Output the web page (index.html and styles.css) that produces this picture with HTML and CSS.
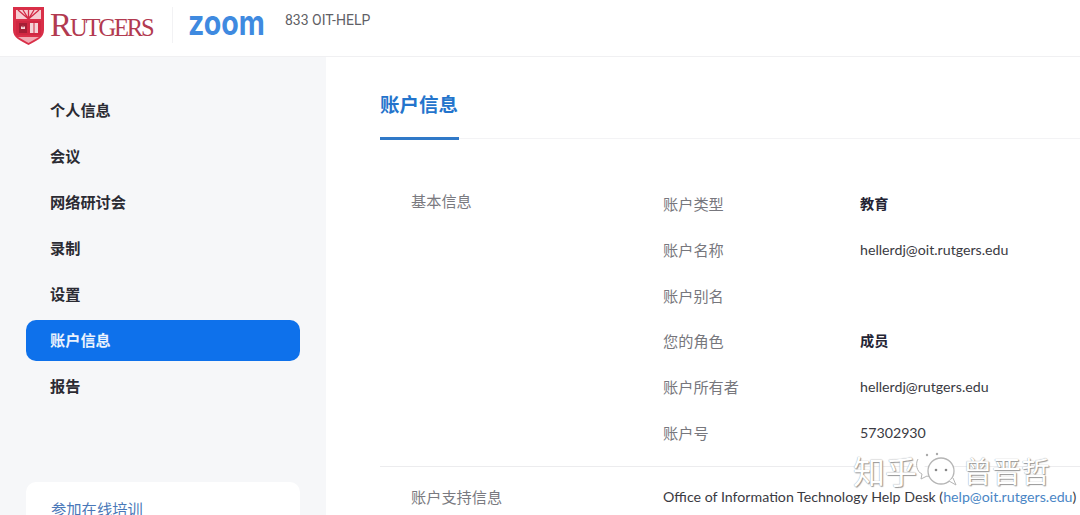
FILE: index.html
```html
<!DOCTYPE html>
<html lang="zh">
<head>
  <meta charset="UTF-8" />
  <title>账户信息</title>
  <link rel="stylesheet" href="styles.css">
</head>
<body>
  <header class="topbar">
    <svg class="shield" width="31" height="38" viewBox="0 0 31 38">
      <path d="M0 0h31v23c0 8-8 11-15.500 15C8 34 0 31 0 23z" fill="#d92f48"/>
      <path d="M3 3h25v9H3z" fill="#f6cdd2"/>
      <path d="M15.500 12 5 3M15.500 12 10 3M15.500 12V3M15.500 12 21 3M15.500 12 26 3" stroke="#d22a44" stroke-width="1.300"/>
      <path d="M3 14h25v14H3z" fill="#d12742"/>
      <path d="M6 16h8v10H6z" fill="#a51e35"/>
      <path d="M8 19l1.500 1.500L10 18l.5 2.500L12 19v3H8z" fill="#f4d4d8"/>
      <path d="M17 16h8v10h-8z" fill="#f4d4d8"/>
      <path d="M21 16v10" stroke="#d12742"/>
      <path d="M5 30h21l-10.500 6z" fill="#f2aab4"/>
    </svg>
    <span class="wordmark">R<small>UTGERS</small></span>
    <span class="topbar-sep"></span>
    <span class="zoom-logo">zoom</span>
    <span class="phone">833 OIT-HELP</span>
  </header>

  <div class="layout">
    <aside class="sidebar">
      <nav class="nav">
        <a class="nav-item">个人信息</a>
        <a class="nav-item">会议</a>
        <a class="nav-item">网络研讨会</a>
        <a class="nav-item">录制</a>
        <a class="nav-item">设置</a>
        <a class="nav-item active">账户信息</a>
        <a class="nav-item">报告</a>
      </nav>
      <div class="training">参加在线培训</div>
    </aside>

    <main class="content">
      <div class="tabs"><span class="tab">账户信息</span></div>

      <section class="section first">
        <h2 class="section-title">基本信息</h2>
        <div class="rows">
          <div class="row"><span class="label">账户类型</span><b class="value">教育</b></div>
          <div class="row"><span class="label">账户名称</span><span class="value">hellerdj@oit.rutgers.edu</span></div>
          <div class="row"><span class="label">账户别名</span></div>
          <div class="row"><span class="label">您的角色</span><b class="value">成员</b></div>
          <div class="row"><span class="label">账户所有者</span><span class="value">hellerdj@rutgers.edu</span></div>
          <div class="row"><span class="label">账户号</span><span class="value">57302930</span></div>
        </div>
      </section>

      <section class="section">
        <h2 class="section-title">账户支持信息</h2>
        <div class="support">Office of Information Technology Help Desk (<a class="mail">help@oit.rutgers.edu</a>)</div>
      </section>
    </main>
  </div>

  <div class="watermark">
    <span class="wm-zhihu">知乎</span>
    <svg class="wm-icon" width="46" height="40" viewBox="0 0 46 40" fill="#fff" stroke="#b5b5b5" stroke-width="1">
      <path d="M3 9c-3 5-1 13 4 15l-1 5 6-3c2 1 4 1 6 0"/>
      <circle cx="12" cy="5" r="1.200" fill="#aaa" stroke="none"/>
      <circle cx="22" cy="4" r="1.200" fill="#aaa" stroke="none"/>
      <circle cx="26" cy="21" r="13" stroke-width="1.300"/>
      <path d="M34 31l7 4-3-7"/>
      <circle cx="21" cy="20" r="1.300" fill="#888" stroke="none"/>
      <circle cx="31" cy="20" r="1.300" fill="#888" stroke="none"/>
    </svg>
    <span class="wm-name">曾晋哲</span>
  </div>
</body>
</html>
```

FILE: styles.css
```css
* {
  box-sizing: border-box;
}
html, body {
  height: 100%;
}
body {
  margin: 0;
  overflow: hidden;
  background: #fff;
  color: #232333;
  font-family: Lato, "Noto Sans CJK SC", sans-serif;
  font-size: 14px;
}

.topbar {
  height: 57px;
  display: flex;
  align-items: center;
  padding: 0 0 6px 13px;
  border-bottom: 1px solid #f0f0f2;
}
.shield {
  flex: none;
  margin-top: 2px;
}
.wordmark {
  margin-left: 6px;
  width: 109px;
  color: #b23a50;
  font-family: "Liberation Serif", serif;
  font-size: 33px;
  line-height: 1;
  letter-spacing: -2.100px;
  white-space: nowrap;
}
.wordmark small {
  font-size: 24.500px;
}
.topbar-sep {
  width: 1px;
  height: 36px;
  background: #f2f2f4;
  margin-left: 13px;
}
.zoom-logo {
  width: 74px;
  margin-left: 15px;
  margin-top: -4px;
  color: #3f8ae0;
  font-family: Inter, sans-serif;
  font-size: 34px;
  font-weight: 700;
  line-height: 1;
  transform: scaleX(0.84);
  transform-origin: left center;
}
.phone {
  margin-left: 23px;
  margin-top: -10px;
  color: #5f5f66;
  font-family: Roboto, sans-serif;
  font-size: 14px;
}

.layout {
  display: flex;
  height: 458px;
  overflow: hidden;
}
.sidebar {
  flex: none;
  width: 326px;
  background: #f6f7f9;
  padding: 33px 26px 0;
}
.nav {
  display: flex;
  flex-direction: column;
  gap: 5px;
  width: 274px;
}
.nav-item {
  height: 41px;
  line-height: 41px;
  padding-top: 0;
  padding-left: 24px;
  border-radius: 10px;
  color: #2b2b33;
  font-size: 15.200px;
  font-weight: 700;
}
.nav-item.active {
  background: #0e71eb;
  color: #e9f2fd;
}
.training {
  margin-top: 75px;
  width: 274px;
  height: 33px;
  padding: 17px 0 0 25px;
  background: #fff;
  border-radius: 10px 10px 0 0;
  color: #4a78b8;
  font-size: 15.300px;
  line-height: 20px;
  overflow: hidden;
}

.content {
  flex: 1;
  padding-left: 54px;
}
.tabs {
  height: 82px;
  border-bottom: 1px solid #f3f3f5;
  display: flex;
}
.tab {
  width: 79px;
  height: 83px;
  padding-top: 33px;
  border-bottom: 3px solid #3079c8;
  color: #2474cc;
  font-size: 19.500px;
  font-weight: 700;
  line-height: 30px;
  white-space: nowrap;
}
.section {
  display: flex;
  padding-left: 31px;
  border-top: 1px solid #ececee;
  padding-top: 20px;
}
.section.first {
  border-top: 0;
  padding-top: 57px;
  height: 327px;
}
.section-title {
  margin: 0;
  width: 252px;
  color: #7a7a80;
  font-size: 15.200px;
  font-weight: 400;
  line-height: 20px;
}
.first .section-title {
  margin-top: -5px;
}
.rows {
  display: flex;
  flex-direction: column;
  gap: 25.800px;
  margin-top: -2px;
}
.row {
  display: flex;
  height: 20px;
  line-height: 20px;
}
.label {
  width: 197px;
  color: #77777d;
  font-size: 15.200px;
}
.value {
  color: #3a3a42;
  font-size: 14.200px;
}
b.value {
  color: #232333;
}
.support {
  color: #3a3a42;
  font-size: 14.200px;
  line-height: 20px;
  white-space: nowrap;
}
.mail {
  color: #4a86c5;
}

.watermark {
  position: absolute;
  left: 853px;
  top: 450px;
  display: flex;
  align-items: center;
  color: #fff;
  font-family: "Noto Sans CJK SC", sans-serif;
  line-height: 30px;
  text-shadow: 0 0 1px #888, 1px 1px 1px #999;
}
.wm-zhihu {
  font-size: 32px;
}
.wm-icon {
  margin-left: -2px;
}
.wm-name {
  margin-left: 2px;
  font-size: 29px;
}
```
